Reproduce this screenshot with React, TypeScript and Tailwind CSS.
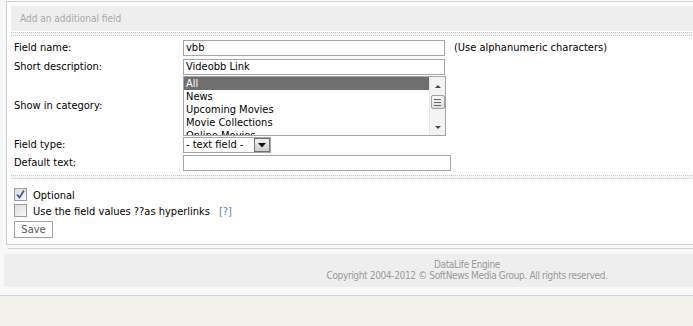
import React from "react";

const F = "font-['DejaVu_Sans_Condensed','DejaVu_Sans',sans-serif]";

function Dotted() {
  return (
    <div className="h-[4px] border-t border-b border-dotted border-[#c8c8c8] bg-[#f4f4f4]" />
  );
}

function Check({ checked }: { checked?: boolean }) {
  return (
    <div className="w-[13px] h-[13px] shrink-0 border border-[#9a9a9a] bg-gradient-to-br from-[#dcdcdc] to-[#fafafa] flex items-center justify-center">
      {checked && (
        <svg width="11" height="11" viewBox="0 0 11 11">
          <path d="M2 5.5 L4.5 8.5 L9 1.5" stroke="#3a5aa8" strokeWidth="1.8" fill="none" />
        </svg>
      )}
    </div>
  );
}

export default function App() {
  const items = ["All", "News", "Upcoming Movies", "Movie Collections", "Online Movies"];
  return (
    <div className={`w-full h-[326px] overflow-hidden bg-[#f2f1ec] ${F} text-[11px] text-black`}>
      <div className="w-[930px] bg-[#f8f8f8] pt-px border-b border-[#d2d2d2]">
        <div className="ml-[6px] h-[244px] bg-white border-t border-l border-b border-[#d2d2d2] p-[4px]">
          <div className="h-[25px] bg-[#eeeeee] flex items-center pl-[9px] text-[10px] text-[#a8a8a8]">
            Add an additional field
          </div>
          <div className="mt-[1px]">
            <Dotted />
          </div>
          <div className="pl-[3px] flex flex-col">
            <div className="mt-[4px] flex items-center h-[16px]">
              <div className="w-[169px]">Field name:</div>
              <div className="w-[262px] h-[16px] border border-[#a5a5a5] pl-[2px] leading-[14px]">vbb</div>
              <div className="ml-[9px]">(Use alphanumeric characters)</div>
            </div>
            <div className="mt-[3px] flex items-center h-[16px]">
              <div className="w-[169px]">Short description:</div>
              <div className="w-[262px] h-[16px] border border-[#a5a5a5] pl-[2px] leading-[14px]">Videobb Link</div>
            </div>
            <div className="mt-[1px] flex items-center h-[60px]">
              <div className="w-[169px]">Show in category:</div>
              <div className="w-[263px] h-[60px] border border-[#a5a5a5] flex overflow-hidden">
                <div className="flex-1 flex flex-col overflow-hidden">
                  {items.map((it, i) => (
                    <div
                      key={it}
                      className={`h-[13px] shrink-0 leading-[13px] pl-[2px] ${i === 0 ? "bg-[#6e6e6e] text-white" : ""}`}
                    >
                      {it}
                    </div>
                  ))}
                </div>
                <div className="w-[16px] h-full bg-[#f3f3f3] border-l border-[#e6e6e6] flex flex-col items-center">
                  <svg width="16" height="16" viewBox="0 0 16 16" className="mt-[1px]">
                    <path d="M5 10 L8 7 L11 10 Z" fill="#444" />
                  </svg>
                  <div className="w-[14px] h-[14px] mt-[1px] border border-[#a0a0a0] rounded-[2px] bg-gradient-to-b from-[#fafafa] to-[#dedede] flex flex-col items-center justify-center gap-[2px]">
                    <div className="w-[7px] h-px bg-[#666]" />
                    <div className="w-[7px] h-px bg-[#666]" />
                    <div className="w-[7px] h-px bg-[#666]" />
                  </div>
                  <div className="flex-1" />
                  <svg width="16" height="16" viewBox="0 0 16 16">
                    <path d="M5 7 L8 10 L11 7 Z" fill="#444" />
                  </svg>
                </div>
              </div>
            </div>
            <div className="mt-[1px] flex items-center h-[16px]">
              <div className="w-[169px]">Field type:</div>
              <div className="w-[88px] h-[16px] border border-[#a5a5a5] flex items-center">
                <div className="flex-1 pl-[2px] leading-[14px]">- text field -</div>
                <div className="w-[16px] h-[14px] border border-[#707070] bg-gradient-to-b from-[#f0f0f0] to-[#cfcfcf] flex items-center justify-center">
                  <svg width="8" height="5" viewBox="0 0 8 5">
                    <path d="M0 0 L8 0 L4 4.5 Z" fill="#111" />
                  </svg>
                </div>
              </div>
            </div>
            <div className="mt-[2px] flex items-center h-[16px]">
              <div className="w-[169px]">Default text:</div>
              <div className="w-[268px] h-[16px] border border-[#a5a5a5]" />
            </div>
          </div>
          <div className="mt-[4px]">
            <Dotted />
          </div>
          <div className="pl-[3px] flex flex-col">
            <div className="mt-[9px] flex items-center h-[13px]">
              <Check checked />
              <span className="ml-[6px] leading-[13px] pt-[2px]">Optional</span>
            </div>
            <div className="mt-[3px] flex items-center h-[13px]">
              <Check />
              <span className="ml-[6px] leading-[13px] pt-[2px]">Use the field values ??as hyperlinks</span>
              <span className="ml-[9px] leading-[13px] pt-[2px] text-[#4f7fbf]">[?]</span>
            </div>
            <div className="mt-[4px]">
              <button className="w-[39px] h-[17px] border border-[#a0a0a0] bg-white text-[#555] text-[11px] leading-[15px] flex items-center justify-center">
                Save
              </button>
            </div>
          </div>
        </div>
        <div className="mt-[3px] ml-[8px] border-t border-[#d2d2d2]" />
        <div className="mt-[5px] ml-[4px] h-[33px] bg-[#eeeeee] flex flex-col items-center justify-center pb-[2px] text-[10px] tracking-[-0.35px] text-[#9a9a9a] leading-[11px]">
          <div>DataLife Engine</div>
          <div>Copyright 2004-2012 © SoftNews Media Group. All rights reserved.</div>
        </div>
        <div className="h-[8px]" />
      </div>
    </div>
  );
}
